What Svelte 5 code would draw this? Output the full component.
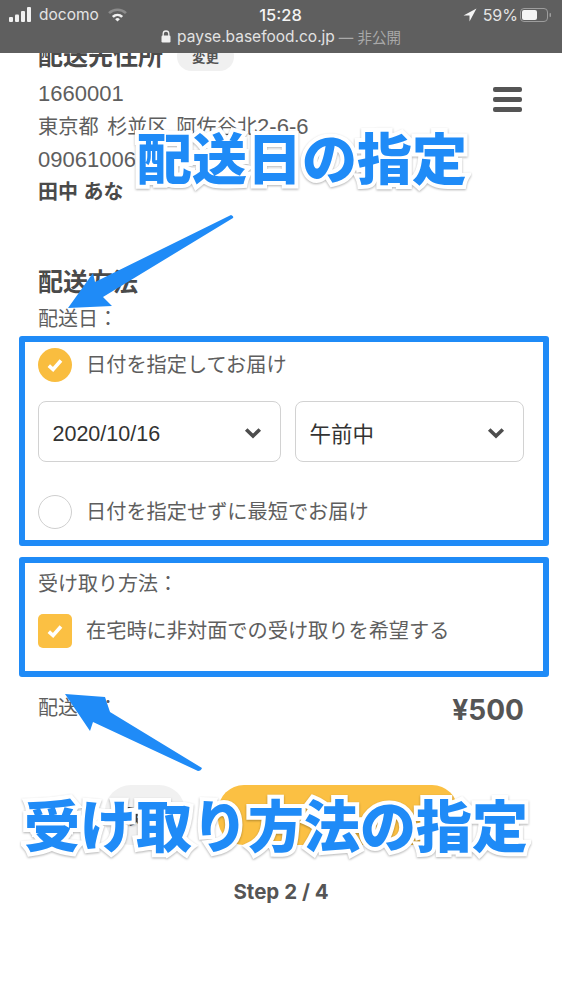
<script>
  const address = [
    { text: '1660001', tail: '', cls: 'num' },
    { text: '東京都 杉並区 阿佐谷北', tail: '2-6-6', cls: 'place' },
    { text: '09061006000', tail: '', cls: 'num' },
    { text: '田中 あな', tail: '', cls: 'name' }
  ];
</script>

<div class="page">
  <header class="bar">
    <div class="bar-top">
      <div class="carrier">
        <svg class="signal" viewBox="0 0 24 16" width="24" height="16" aria-hidden="true">
          <rect x="0" y="10" width="4" height="5" rx="1" />
          <rect x="6" y="7.5" width="4" height="7.5" rx="1" />
          <rect x="12" y="4" width="4" height="11" rx="1" />
          <rect x="18" y="0" width="4" height="15" rx="1" />
        </svg>
        <span>docomo</span>
        <svg viewBox="0 0 22 16" width="21" height="15" aria-hidden="true">
          <path d="M1 5.5a14.5 14.5 0 0 1 20 0l-2 2a11.6 11.6 0 0 0-16 0z" fill="#8b8b8b" />
          <path d="M5 9.5a9 9 0 0 1 12 0l-2 2a6 6 0 0 0-8 0z" fill="#f1f1f1" />
          <path d="M8.5 13a3.6 3.6 0 0 1 5 0L11 15.5z" fill="#f1f1f1" />
        </svg>
      </div>
      <div class="time">15:28</div>
      <div class="battery-wrap">
        <svg viewBox="0 0 14 14" width="14" height="14" aria-hidden="true">
          <path d="M13.5 0.5 L6.5 13.5 V7.5 H0.5 Z" fill="#f4f4f4" />
        </svg>
        <span>59%</span>
        <svg viewBox="0 0 32 16" width="32" height="16" aria-hidden="true">
          <rect x="0.5" y="1.5" width="27" height="13" rx="3.5" fill="none" stroke="#9d9d9d" />
          <rect x="2" y="3" width="15" height="10" rx="2" fill="#f4f4f4" />
          <rect x="29.5" y="6" width="1.5" height="4" rx="0.7" fill="#9d9d9d" />
        </svg>
      </div>
    </div>
    <div class="url">
      <svg viewBox="0 0 10 13" width="10" height="13" aria-hidden="true">
        <path d="M2.2 6V3.8a2.8 2.8 0 0 1 5.6 0V6" fill="none" stroke="#f0f0f0" stroke-width="1.3" />
        <rect x="0.5" y="5.5" width="9" height="7" rx="1.2" fill="#f0f0f0" />
      </svg>
      <span class="host">payse.basefood.co.jp</span>
      <span class="private">— 非公開</span>
    </div>
  </header>

  <button class="menu" aria-label="メニュー"><i></i><i></i><i></i></button>

  <main>
    <div class="section-head">
      <h2>配送先住所</h2>
      <span class="badge">変更</span>
    </div>
    <div class="address">
      {#each address as line}
        <p class={line.cls}>{line.text}{#if line.tail}<span class="tail">{line.tail}</span>{/if}</p>
      {/each}
    </div>

    <h2 class="method">配送方法</h2>
    <p class="label">配送日：</p>

    <section class="box date-box">
      <div class="option">
        <span class="radio on">
          <svg viewBox="0 0 16 14" width="18" height="16" aria-hidden="true"><path d="M2.5 7.5l3.8 3.5 7-8" fill="none" stroke="#fff" stroke-width="3.2" /></svg>
        </span>
        <span>日付を指定してお届け</span>
      </div>
      <div class="selects">
        <div class="select date">
          <span>2020/10/16</span>
          <svg viewBox="0 0 18 12" width="18" height="12" aria-hidden="true"><path d="M2.2 2.5L9 9l6.8-6.5" fill="none" stroke="#4d4d4d" stroke-width="3.6" /></svg>
        </div>
        <div class="select time-slot">
          <span>午前中</span>
          <svg viewBox="0 0 18 12" width="18" height="12" aria-hidden="true"><path d="M2.2 2.5L9 9l6.8-6.5" fill="none" stroke="#4d4d4d" stroke-width="3.6" /></svg>
        </div>
      </div>
      <div class="option second">
        <span class="radio"></span>
        <span>日付を指定せずに最短でお届け</span>
      </div>
    </section>

    <section class="box receive-box">
      <p class="label">受け取り方法：</p>
      <div class="option">
        <span class="check">
          <svg viewBox="0 0 16 14" width="18" height="16" aria-hidden="true"><path d="M2.5 7.5l3.8 3.5 7-8" fill="none" stroke="#fff" stroke-width="3.2" /></svg>
        </span>
        <span>在宅時に非対面での受け取りを希望する</span>
      </div>
    </section>

    <div class="fee">
      <span>配送料：</span>
      <strong>¥500</strong>
    </div>

    <div class="actions">
      <button class="back">戻る</button>
      <button class="next">次へ</button>
    </div>

    <p class="step">Step 2 / 4</p>
  </main>

  <svg class="arrows" viewBox="0 0 562 1000" width="562" height="1000" aria-hidden="true">
    <path d="M231 215 Q234 216 233 218 L103 297 L112 306 L68 308 L93 273 L95 282 Z" fill="#1f8bf7" />
    <path d="M202 768 Q201 771 198 771 L93 722 L90 731 L65 694 L105 697 L110 712 Z" fill="#1f8bf7" />
  </svg>

  <div class="note note-top">配送日の指定</div>
  <div class="note note-bottom">受け取り方法の指定</div>
</div>

<style>
  :global(body) {
    margin: 0;
    background: #fff;
  }

  .page {
    position: relative;
    width: 562px;
    height: 1000px;
    overflow: hidden;
    font-family: "Liberation Sans", "Noto Sans CJK JP", sans-serif;
    color: #5e5e5e;
  }

  p, h2 {
    margin: 0;
  }

  .bar {
    position: absolute;
    inset: 0 0 auto 0;
    height: 53px;
    background: #5f5f5f;
    color: #e4e4e4;
    font-family: Inter, "Noto Sans CJK JP", sans-serif;
    z-index: 2;
  }

  .bar-top {
    display: grid;
    grid-template-columns: 1fr auto 1fr;
    align-items: center;
    height: 29px;
    padding: 0 10px 0 9px;
    font-size: 15.5px;
  }

  .carrier, .battery-wrap {
    display: flex;
    align-items: center;
    gap: 6px;
  }

  .signal {
    fill: #f1f1f1;
  }

  .carrier span {
    margin-right: 2px;
  }

  .battery-wrap {
    justify-content: flex-end;
    gap: 6px;
  }

  .battery-wrap span {
    margin-right: -4px;
    font-size: 16px;
  }

  .time {
    font-size: 16.5px;
    font-weight: 500;
    color: #f4f4f4;
  }

  .url {
    display: flex;
    justify-content: center;
    align-items: center;
    gap: 6px;
    height: 14px;
    font-size: 15.5px;
    color: #e2e2e2;
  }

  .private {
    margin-left: -2px;
    color: #a9a9a9;
    font-size: 14.5px;
  }

  .menu {
    position: absolute;
    top: 87px;
    left: 493px;
    width: 29px;
    padding: 0;
    border: 0;
    background: none;
    display: flex;
    flex-direction: column;
    gap: 5.5px;
  }

  .menu i {
    display: block;
    height: 4.5px;
    border-radius: 2px;
    background: #555;
  }

  main {
    padding: 38px 38px 0;
  }

  h2 {
    font-size: 25px;
    font-weight: 700;
    line-height: 36px;
    color: #4a4a4a;
  }

  .section-head {
    display: flex;
    align-items: center;
    gap: 14px;
  }

  .badge {
    display: flex;
    align-items: center;
    justify-content: center;
    width: 57px;
    height: 29px;
    border-radius: 15px;
    background: #f0f0f0;
    font-size: 13.5px;
    font-weight: 700;
    color: #555;
  }

  .address {
    margin-top: 3px;
  }

  .address p {
    height: 33px;
    line-height: 33px;
    font-size: 20.2px;
    white-space: nowrap;
  }

  .address .place {
    word-spacing: 3px;
  }

  .address .tail {
    font-size: 22px;
  }

  .address .num {
    font-size: 22px;
  }

  .address .name {
    font-size: 20px;
    font-weight: 700;
    color: #4a4a4a;
  }

  .method {
    margin-top: 55px;
  }

  .label {
    font-size: 20px;
    line-height: 28px;
  }

  .box {
    margin-inline: -19px;
    border: 6px solid #1f8bf7;
    border-radius: 3px;
    padding: 0 18px 0 13px;
    box-sizing: border-box;
    width: 530px;
  }

  main > .label {
    margin-top: 5px;
  }

  .date-box {
    margin-top: 3px;
    height: 210px;
  }

  .option {
    display: flex;
    align-items: center;
    gap: 14px;
    font-size: 20.2px;
    line-height: 34px;
    white-space: nowrap;
  }

  .date-box > .option:first-child {
    margin-top: 6px;
  }

  .radio {
    flex: none;
    display: flex;
    align-items: center;
    justify-content: center;
    box-sizing: border-box;
    width: 34px;
    height: 34px;
    border-radius: 50%;
    border: 1.5px solid #cfcfcf;
  }

  .radio.on {
    border: 0;
    background: #f9bd3f;
  }

  .check {
    flex: none;
    display: flex;
    align-items: center;
    justify-content: center;
    width: 34px;
    height: 34px;
    border-radius: 5px;
    background: #fbc043;
  }

  .selects {
    display: flex;
    gap: 14px;
    margin-top: 19px;
  }

  .select {
    display: flex;
    align-items: center;
    justify-content: space-between;
    box-sizing: border-box;
    height: 61px;
    padding: 2px 18px 0 13.5px;
    border: 1.5px solid #d2d2d2;
    border-radius: 8px;
    font-size: 21.5px;
    color: #333;
  }

  .select.date {
    width: 243px;
  }

  .select.date span {
    margin-top: 3px;
  }

  .select.time-slot {
    width: 229px;
  }

  .option.second {
    margin-top: 33px;
  }

  .receive-box {
    margin-top: 11px;
    height: 120px;
    padding-top: 7px;
  }

  .receive-box .option {
    margin-top: 16px;
  }

  .fee {
    display: flex;
    justify-content: space-between;
    align-items: center;
    margin-top: 11px;
    height: 36px;
    font-size: 20px;
  }

  .fee strong {
    font-family: Inter, sans-serif;
    font-size: 28px;
    color: #555;
    margin-top: 7px;
  }

  .actions {
    display: flex;
    gap: 33px;
    margin: 61px 0 0 67px;
  }

  .actions button {
    height: 60px;
    border: 0;
    padding: 0;
    font: 700 20px "Liberation Sans", "Noto Sans CJK JP", sans-serif;
    color: #444;
  }

  .back {
    width: 80px;
    border-radius: 26px;
    background: #f1f1f1;
  }

  .next {
    width: 240px;
    border-radius: 26px;
    background: #fbc043;
  }

  .step {
    margin-top: 30px;
    text-align: center;
    font-family: Inter, sans-serif;
    font-size: 20.5px;
    font-weight: 700;
    color: #555;
    line-height: 34px;
  }

  .arrows {
    position: absolute;
    inset: 0;
    z-index: 3;
    pointer-events: none;
  }

  .note {
    position: absolute;
    left: 0;
    width: 562px;
    text-align: center;
    z-index: 4;
    font-family: "Noto Sans CJK JP", sans-serif;
    font-weight: 900;
    line-height: 70px;
    white-space: nowrap;
    color: #1f8bf7;
    -webkit-text-stroke: 8px #fff;
    paint-order: stroke fill;
    filter: drop-shadow(0 1px 1px rgba(0, 0, 0, 0.3));
  }

  .note-top {
    top: 120px;
    font-size: 55px;
    text-indent: 42px;
  }

  .note-bottom {
    top: 788px;
    font-size: 56px;
    text-indent: -10px;
  }
</style>
